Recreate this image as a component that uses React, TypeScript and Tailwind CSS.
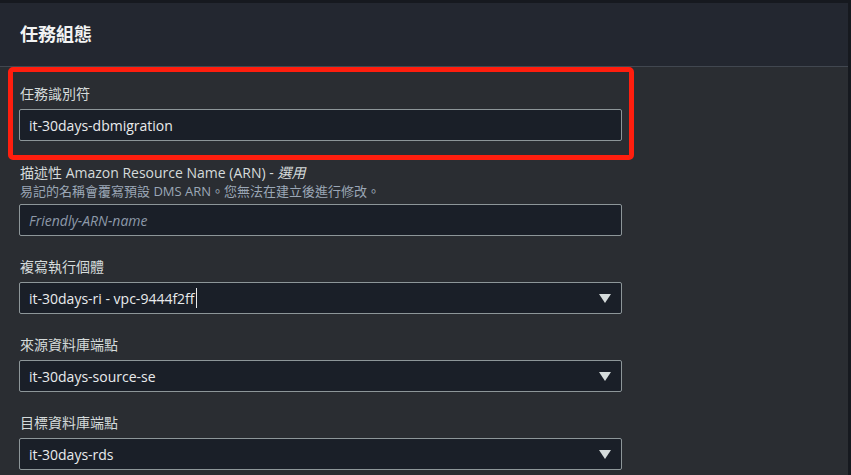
import React from "react";

const font = { fontFamily: '"Open Sans", "Noto Sans CJK TC", sans-serif' };

function Caret() {
  return (
    <svg width="12" height="9" viewBox="0 0 12 9" className="shrink-0">
      <path d="M0 0 H12 L6 9 Z" fill="#d5dbdb" />
    </svg>
  );
}

function Field({
  label,
  children,
}: {
  label: React.ReactNode;
  children: React.ReactNode;
}) {
  return (
    <div className="flex flex-col">
      <div className="text-[14px] leading-[20px] text-[#d5dbdb]">{label}</div>
      {children}
    </div>
  );
}

function Select({ value, cursor }: { value: string; cursor?: boolean }) {
  return (
    <div className="mt-[5px] flex h-[32px] w-[603px] items-center justify-between rounded-[2px] border border-[#8d9699] bg-[#1a1f28] pl-[9px] pr-[10px]">
      <span className="flex items-center text-[14px] text-[#e9ebed]">
        {value}
        {cursor && <span className="ml-[1px] inline-block h-[20px] w-[1px] bg-[#e9ebed]" />}
      </span>
      <Caret />
    </div>
  );
}

export default function App() {
  return (
    <div className="flex h-[475px] w-[851px] bg-[#16191f] pt-[3px]" style={font}>
      <div className="flex flex-1 flex-col overflow-hidden">
        <div className="flex h-[64px] items-center border-b border-[#414750] bg-[#232730] px-[20px]">
          <h2 className="text-[18px] font-bold text-[#f2f3f3]">任務組態</h2>
        </div>
        <div className="relative flex flex-1 flex-col bg-[#2a2d32] pl-[19px] pt-[17px]">
          <div className="pointer-events-none absolute left-[8px] top-0 h-[93px] w-[626px] rounded-[5px] border-[5px] border-[#ff1e0e]" />

          <Field label={<span className="pl-[1px]">任務識別符</span>}>
            <div className="mt-[5px] flex h-[32px] w-[603px] items-center rounded-[2px] border border-[#8d9699] bg-[#1a1f28] pl-[9px] text-[14px] text-[#e9ebed]">
              it-30days-dbmigration
            </div>
          </Field>

          <div className="mt-[22px]">
            <Field
              label={
                <span className="pl-[1px]">
                  描述性 Amazon Resource Name (ARN) - <i>選用</i>
                </span>
              }
            >
              <div className="pl-[1px] text-[13px] leading-[17px] text-[#9ba7b6]">
                易記的名稱會覆寫預設 DMS ARN。您無法在建立後進行修改。
              </div>
              <div className="mt-[4px] flex h-[32px] w-[603px] items-center rounded-[2px] border border-[#8d9699] bg-[#1a1f28] pl-[9px] text-[14px] italic text-[#8d99a8]">
                Friendly-ARN-name
              </div>
            </Field>
          </div>

          <div className="mt-[21px]">
            <Field label={<span className="pl-[1px]">複寫執行個體</span>}>
              <Select value="it-30days-ri - vpc-9444f2ff" cursor />
            </Field>
          </div>

          <div className="mt-[21px]">
            <Field label={<span className="pl-[1px]">來源資料庫端點</span>}>
              <Select value="it-30days-source-se" />
            </Field>
          </div>

          <div className="mt-[21px]">
            <Field label={<span className="pl-[1px]">目標資料庫端點</span>}>
              <Select value="it-30days-rds" />
            </Field>
          </div>
        </div>
      </div>
      <div className="w-[3px] bg-[#16191f]" />
    </div>
  );
}
